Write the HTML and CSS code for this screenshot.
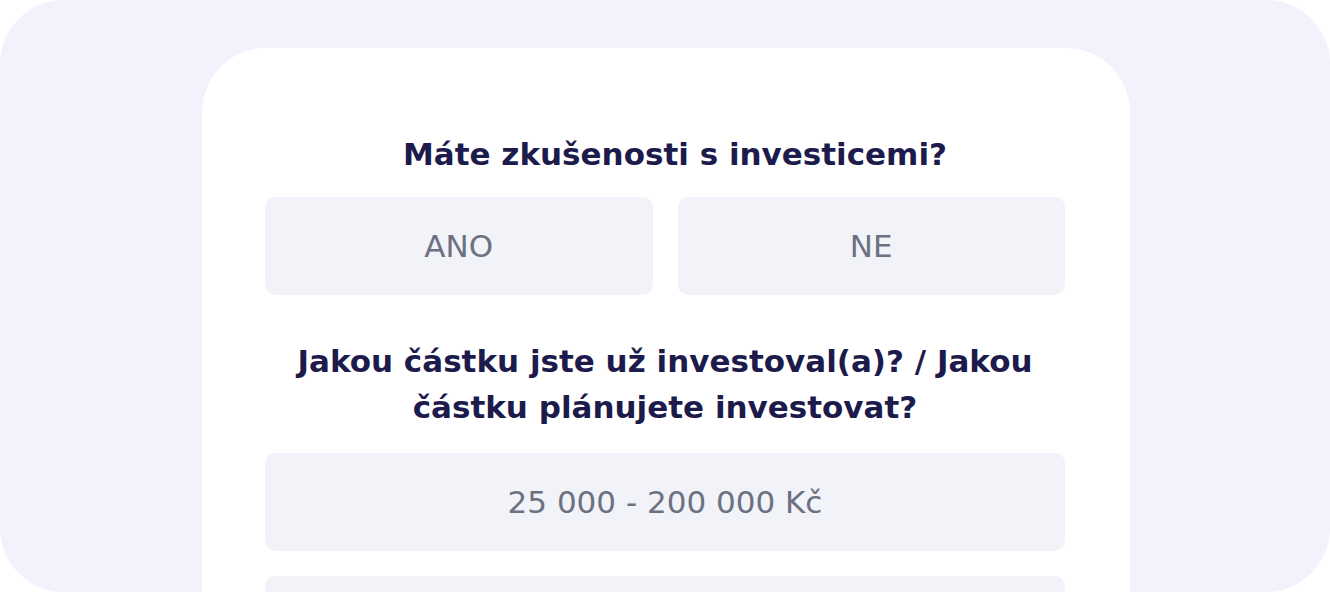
FILE: index.html
```html
<!DOCTYPE html>
<html lang="cs">
<head>
<meta charset="utf-8">
<title>Investiční dotazník</title>
<link rel="stylesheet" href="styles.css">
</head>
<body>
<div class="frame">
  <div class="card">
    <h2 class="question q1">Máte zkušenosti s investicemi?</h2>
    <div class="choices two">
      <button class="choice">ANO</button>
      <button class="choice">NE</button>
    </div>
    <h2 class="question q2">Jakou částku jste už investoval(a)? / Jakou částku plánujete investovat?</h2>
    <div class="choices one">
      <button class="choice">25 000 - 200 000 Kč</button>
      <button class="choice" aria-label="další možnost"></button>
    </div>
  </div>
</div>
</body>
</html>
```

FILE: styles.css
```css
html, body {
  margin: 0;
  padding: 0;
  background: #ffffff;
}
body {
  font-family: "DejaVu Sans", "Noto Sans", sans-serif;
}
.frame {
  width: 1330px;
  height: 592px;
  box-sizing: border-box;
  background: #f1f2fb;
  border-radius: 64px;
  padding-top: 48px;
  overflow: hidden;
}
.card {
  margin-left: 202px;
  width: 928px;
  min-height: 700px;
  box-sizing: border-box;
  background: #ffffff;
  border-radius: 64px 64px 0 0;
  padding: 83px 65px 0 63px;
}
.question {
  margin: 0;
  font-size: 31px;
  line-height: 46px;
  font-weight: 700;
  color: #1c1b4b;
  text-align: center;
}
.q1 {
  padding-left: 20px;
}
.q2 {
  margin: 43px auto 23px;
  max-width: 780px;
}
.choices {
  display: grid;
  gap: 25px;
}
.choices.two {
  grid-template-columns: 1fr 1fr;
  margin-top: 20px;
}
.choice {
  height: 98px;
  border: none;
  border-radius: 10px;
  background: #f2f3f8;
  color: #6c7182;
  font-family: "DejaVu Sans", "Noto Sans", sans-serif;
  font-size: 31px;
  font-weight: 400;
  padding: 0;
}
```
